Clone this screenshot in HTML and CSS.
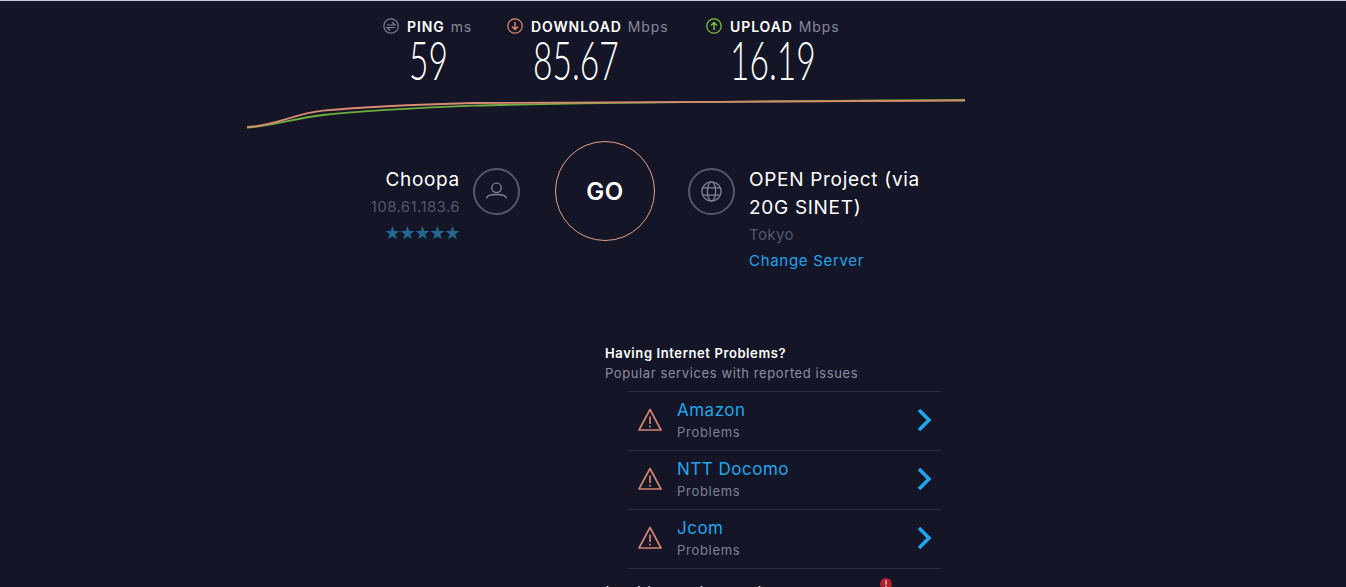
FILE: index.html
```html
<!DOCTYPE html>
<html>
	<head>
		<meta charset="utf-8">
		<link rel="stylesheet" href="styles.css">
		<title>Speedtest</title>
	</head>
	<body>
		<main class="page">
			<section class="stats">
				<div class="stat stat_ping">
					<div class="stat_label">
						<svg class="stat_icon" viewBox="0 0 16 16" fill="none" stroke="#7f8192" stroke-width="1.2"><circle cx="8" cy="8" r="7.2"/><path d="M4 7h8L9 4M12 9.500H4l3 3"/></svg>
						<b>PING</b><span>ms</span>
					</div>
					<div class="stat_num"><span>59</span></div>
				</div>
				<div class="stat stat_down">
					<div class="stat_label">
						<svg class="stat_icon" viewBox="0 0 16 16" fill="none" stroke="#e8896b" stroke-width="1.2"><circle cx="8" cy="8" r="7.2"/><path d="M8 4v7.500M5 8.500l3 3 3-3" stroke-width="1.4"/></svg>
						<b>DOWNLOAD</b><span>Mbps</span>
					</div>
					<div class="stat_num"><span>85.67</span></div>
				</div>
				<div class="stat stat_up">
					<div class="stat_label">
						<svg class="stat_icon" viewBox="0 0 16 16" fill="none" stroke="#7ecb3f" stroke-width="1.2"><circle cx="8" cy="8" r="7.2"/><path d="M8 12V4.500M5 7.500l3-3 3 3" stroke-width="1.4"/></svg>
						<b>UPLOAD</b><span>Mbps</span>
					</div>
					<div class="stat_num"><span>16.19</span></div>
				</div>
			</section>

			<svg class="graph" viewBox="0 0 718 32" fill="none" stroke-width="1.8">
				<path stroke="#6fae3e" d="M0 29.500C22 29 48 20 76 17C120 12.500 170 10 226 7.700C300 5.500 380 4 718 2"/>
				<path stroke="#d98a72" d="M0 29C25 28.500 50 15 76 12.700C120 8.500 170 6.500 226 5C320 3 520 3 718 2.600"/>
			</svg>

			<section class="servers">
				<div class="client">
					<div class="client_text">
						<div class="name">Choopa</div>
						<div class="dim">108.61.183.6</div>
						<div class="stars">★★★★★</div>
					</div>
					<div class="round_icon">
						<svg viewBox="0 0 47 47" fill="none" stroke="#7f8192" stroke-width="1.5"><circle cx="23.500" cy="19.500" r="5.200"/><path d="M12.500 31C13 28 18 26.800 23.500 26.800S34 28 34.500 31"/></svg>
					</div>
				</div>
				<div class="go">GO</div>
				<div class="host">
					<div class="round_icon">
						<svg viewBox="0 0 47 47" fill="none" stroke="#7f8192" stroke-width="1.5"><circle cx="23.500" cy="23.500" r="10.500"/><ellipse cx="23.500" cy="23.500" rx="4.500" ry="10.500"/><path d="M14 19.500h19M14 27.500h19"/></svg>
					</div>
					<div class="host_text">
						<div class="name">OPEN Project (via 20G SINET)</div>
						<div class="dim">Tokyo</div>
						<a class="change">Change Server</a>
					</div>
				</div>
			</section>

			<section class="problems">
				<h3>Having Internet Problems?</h3>
				<p>Popular services with reported issues</p>
				<ul class="issues">
					<li>
						<svg class="warn" viewBox="0 0 24 24" fill="none" stroke="#d08470" stroke-width="1.7" stroke-linejoin="round"><path d="M12 1.500L1 22h22z"/><path d="M12 8.500v7.500M12 17.800v1.700"/></svg>
						<div class="issue_text"><div class="issue_name">Amazon</div><div class="issue_sub">Problems</div></div>
						<svg class="chev" viewBox="0 0 16 24" fill="none" stroke="#1fa7ee" stroke-width="3.500"><path d="M3 2l10 10L3 22"/></svg>
					</li>
					<li>
						<svg class="warn" viewBox="0 0 24 24" fill="none" stroke="#d08470" stroke-width="1.7" stroke-linejoin="round"><path d="M12 1.500L1 22h22z"/><path d="M12 8.500v7.500M12 17.800v1.700"/></svg>
						<div class="issue_text"><div class="issue_name">NTT Docomo</div><div class="issue_sub">Problems</div></div>
						<svg class="chev" viewBox="0 0 16 24" fill="none" stroke="#1fa7ee" stroke-width="3.500"><path d="M3 2l10 10L3 22"/></svg>
					</li>
					<li>
						<svg class="warn" viewBox="0 0 24 24" fill="none" stroke="#d08470" stroke-width="1.7" stroke-linejoin="round"><path d="M12 1.500L1 22h22z"/><path d="M12 8.500v7.500M12 17.800v1.700"/></svg>
						<div class="issue_text"><div class="issue_name">Jcom</div><div class="issue_sub">Problems</div></div>
						<svg class="chev" viewBox="0 0 16 24" fill="none" stroke="#1fa7ee" stroke-width="3.500"><path d="M3 2l10 10L3 22"/></svg>
					</li>
				</ul>
				<div class="next_row">
					<span class="next_text">Looking to learn about</span>
					<span class="alert">!</span>
				</div>
			</section>
		</main>
	</body>
</html>
```

FILE: styles.css
```css
html, body{ margin: 0; height: 100%; overflow: hidden; background: #141526; }
body{ font-family: "Inter", "Liberation Sans", sans-serif; color: #fff; }
.page{ height: 586px; border-top: 1px solid #c9cad2; overflow: hidden; }

.stats{ display: flex; padding: 16px 0 0 383px; height: 97px; box-sizing: border-box; }
.stat_ping{ width: 124px; }
.stat_down{ width: 199px; }
.stat_label{ display: flex; align-items: center; font-size: 14px; letter-spacing: 0.9px; height: 18px; white-space: nowrap; }
.stat_label b{ font-weight: 600; margin: 0 6px 0 8px; }
.stat_label span{ color: #86889a; }
.stat_icon{ width: 16px; height: 16px; }
.stat_num{ font-family: "Lato", "Liberation Sans", sans-serif; font-weight: 300; letter-spacing: 0; font-size: 54px; line-height: 50px; }
.stat_num span{ display: inline-block; transform: scaleX(0.622); transform-origin: left center; }
.stat_ping .stat_num{ padding-left: 26px; }
.stat_down .stat_num{ padding-left: 26px; }
.stat_up .stat_num{ padding-left: 24px; }

.graph{ display: block; width: 718px; height: 32px; margin: 0 0 0 247px; }

.servers{ display: flex; align-items: flex-start; margin-top: 11px; height: 203px; }
.client{ display: flex; justify-content: flex-end; gap: 13px; width: 520px; margin-top: 25px; }
.client_text{ text-align: right; }
.name{ font-size: 19px; line-height: 28px; letter-spacing: 0.7px; }
.name + .dim{ margin-top: -1px; }
.dim{ color: #555666; font-size: 15px; line-height: 27px; letter-spacing: 0.4px; }
.stars{ color: #23688f; font-family: "Noto Sans CJK JP", "DejaVu Sans", sans-serif; font-size: 15px; line-height: 23px; }
.round_icon{ width: 47px; height: 47px; border: 2px solid #565766; border-radius: 50%; box-sizing: border-box; margin-top: 2px; flex: none; }
.round_icon svg{ display: block; width: 43px; height: 43px; }
.go{ width: 100px; height: 100px; box-sizing: border-box; border: 1px solid #e8a184; border-radius: 50%; display: flex; align-items: center; justify-content: center; font-size: 24px; font-weight: 600; letter-spacing: 0.5px; margin-left: 35px; }
.host{ display: flex; gap: 14px; margin-left: 33px; margin-top: 25px; }
.host_text{ width: 190px; }
.change{ display: block; color: #1fa7ee; font-size: 15px; line-height: 26px; letter-spacing: 0.7px; }

.problems{ margin-left: 605px; width: 336px; }
.problems h3{ margin: 0; font-size: 13px; font-weight: 600; line-height: 18px; letter-spacing: 0.6px; }
.problems p{ margin: 2px 0 9px; font-size: 13px; line-height: 18px; letter-spacing: 0.6px; color: #8b8da3; }
.issues{ list-style: none; margin: 0 0 0 23px; padding: 0; }
.issues li{ display: flex; align-items: center; height: 58px; border-top: 1px solid #2c2d3d; }
.issues li:last-child{ border-bottom: 1px solid #2c2d3d; }
.warn{ width: 24px; height: 24px; margin: 0 0 2px 10px; }
.issue_text{ flex: 1; margin: -2px 0 0 15px; }
.issue_name{ color: #1fa7ee; font-size: 17px; line-height: 22px; letter-spacing: 0.5px; }
.issue_sub{ color: #7f8192; font-size: 13px; line-height: 20px; letter-spacing: 0.7px; margin-top: 1px; }
.chev{ width: 16px; height: 24px; margin: 0 9px 2px 0; }

.next_row{ display: flex; align-items: flex-start; margin-top: 9px; }
.next_text{ flex: none; width: 275px; font-size: 18px; line-height: 20px; padding-top: 6px; color: #d8d9e0; white-space: nowrap; }
.alert{ width: 12px; height: 12px; background: #b0202c; border-radius: 50%; font-size: 9px; line-height: 12px; text-align: center; }
```
